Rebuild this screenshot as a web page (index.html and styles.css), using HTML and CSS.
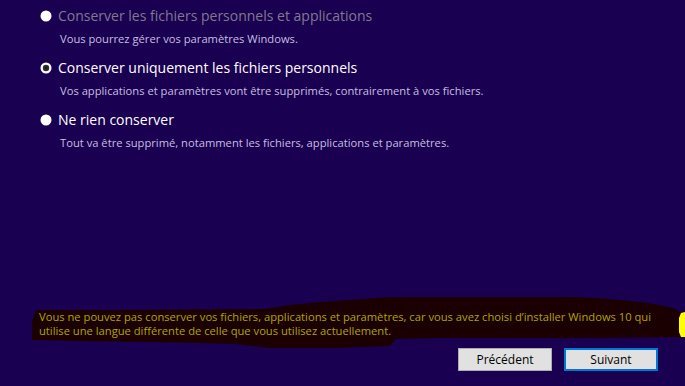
FILE: index.html
```html
<!DOCTYPE html>
<html lang="fr">
<head>
<meta charset="utf-8">
<title>Choisir ce qu'il faut conserver</title>
<link rel="stylesheet" href="styles.css">
</head>
<body>
<div class="page">
  <div class="options">
    <div class="option disabled">
      <div class="row">
        <svg class="radio" width="12" height="12" viewBox="0 0 12 12"><circle cx="6" cy="6" r="5.5" fill="#ffffff"/></svg>
        <span class="title">Conserver les fichiers personnels et applications</span>
      </div>
      <div class="desc">Vous pourrez gérer vos paramètres Windows.</div>
    </div>
    <div class="option">
      <div class="row">
        <svg class="radio" width="12" height="12" viewBox="0 0 12 12"><circle cx="6" cy="6" r="5.5" fill="#ffffff"/><circle cx="6" cy="6" r="3.2" fill="#2e2e2e"/><circle cx="6" cy="6" r="1.4" fill="#1a1a1a"/></svg>
        <span class="title">Conserver uniquement les fichiers personnels</span>
      </div>
      <div class="desc">Vos applications et paramètres vont être supprimés, contrairement à vos fichiers.</div>
    </div>
    <div class="option">
      <div class="row">
        <svg class="radio" width="12" height="12" viewBox="0 0 12 12"><circle cx="6" cy="6" r="5.5" fill="#ffffff"/></svg>
        <span class="title">Ne rien conserver</span>
      </div>
      <div class="desc">Tout va être supprimé, notamment les fichiers, applications et paramètres.</div>
    </div>
  </div>

  <div class="note">
    <svg class="note-bg" width="685" height="54" viewBox="0 296 685 54" preserveAspectRatio="none">
      <path fill="#1a0000" d="M36 310 L120 310 L265 309 L290 305 L320 302 L350 300 L390 297 L575 297 L610 299 L640 302 L660 305 L676 309 L680 313 L680 337 L600 338 L440 338 L396 339 L390 346 L330 348 L270 348 L235 344 L160 342 L80 341 L32 340 L32 322 Z"/>
      <path fill="#ffff00" d="M685 312 L681 313 L679 318 L679 332 L681 337 L685 337 Z"/>
    </svg>
    <p class="note-text">Vous ne pouvez pas conserver vos fichiers, applications et paramètres, car vous avez choisi d’installer Windows 10 qui<br>utilise une langue différente de celle que vous utilisez actuellement.</p>
  </div>

  <div class="buttons">
    <button class="btn">Précédent</button>
    <button class="btn primary">Suivant</button>
  </div>
</div>
</body>
</html>
```

FILE: styles.css
```css
html, body {
  margin: 0;
  padding: 0;
}

body {
  background: #1a0050;
  font-family: "Open Sans", "Noto Sans", sans-serif;
  overflow: hidden;
}

.page {
  height: 386px;
  display: flex;
  flex-direction: column;
}

.options {
  padding: 6px 0 0 40px;
  display: flex;
  flex-direction: column;
  gap: 11px;
}

.row {
  display: flex;
  align-items: center;
  gap: 6px;
  height: 20px;
}

.radio {
  flex: none;
  display: block;
}

.title {
  font-size: 14px;
  line-height: 20px;
  color: #ffffff;
  white-space: nowrap;
}

.disabled .title {
  color: #7f7a92;
}

.desc {
  margin-top: 5px;
  padding-left: 20px;
  font-size: 11.2px;
  line-height: 16px;
  color: #c6bfe0;
  white-space: nowrap;
}

.note {
  margin-top: auto;
  position: relative;
  padding: 14px 0 0 39px;
}

.note-bg {
  position: absolute;
  left: 0;
  top: 0;
  display: block;
}

.note-text {
  position: relative;
  margin: 0;
  font-size: 11.2px;
  line-height: 14px;
  color: #b0a400;
  white-space: nowrap;
}

.buttons {
  display: flex;
  justify-content: flex-end;
  gap: 12px;
  padding: 10px 27px 15px 0;
}

.btn {
  box-sizing: border-box;
  width: 94px;
  height: 23px;
  margin: 0;
  padding: 0;
  background: #e1e1e1;
  border: 1px solid #adadad;
  font-family: "Open Sans", "Noto Sans", sans-serif;
  font-size: 12px;
  color: #000000;
}

.btn.primary {
  border: 2px solid #0078d7;
}
```
